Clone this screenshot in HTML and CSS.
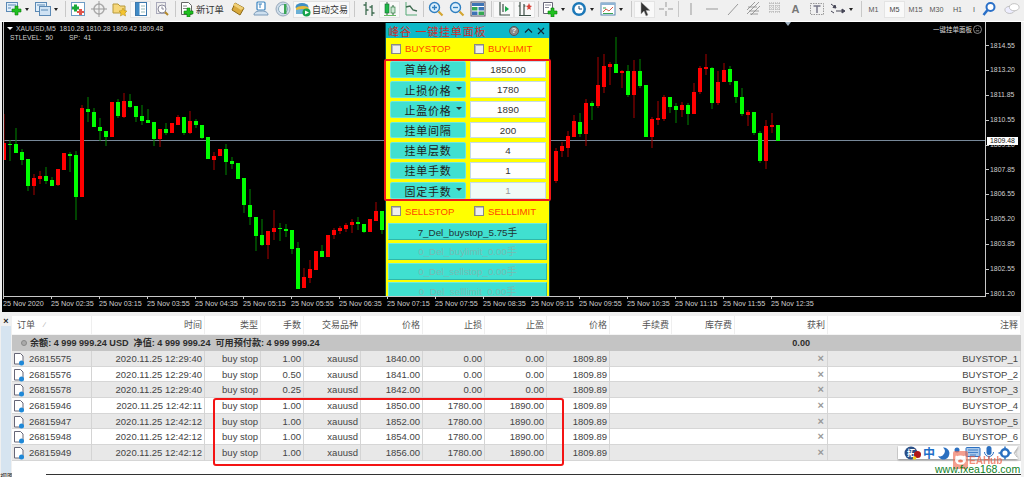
FILE: index.html
```html
<!DOCTYPE html>
<html lang="zh">
<head>
<meta charset="utf-8">
<title>MetaTrader</title>
<link rel="stylesheet" href="styles.css">
</head>
<body>
<svg class="defs" width="0" height="0" aria-hidden="true">
  <symbol id="i-newchart" viewBox="0 0 16 16"><rect x=".5" y="1.5" width="11" height="9" fill="#dfeefa" stroke="#5b89b5"/><path d="M2 4h8M2 7h3" stroke="#5b89b5"/><path d="M9 5h3v3h3v3h-3v3H9v-3H6V8h3z" fill="#1fc01f" stroke="#0b7d0b" stroke-width=".6"/></symbol>
  <symbol id="i-profile" viewBox="0 0 16 16"><rect x=".5" y="1.5" width="11" height="9" fill="#dfeefa" stroke="#5b89b5"/><rect x="4.5" y="5.5" width="11" height="9" fill="#cfe2f3" stroke="#5b89b5"/><path d="M2 4h8M6 9h7" stroke="#5b89b5"/></symbol>
  <symbol id="i-market" viewBox="0 0 16 16"><rect x="1.5" y="1.5" width="13" height="13" fill="#fff" stroke="#6d9cc5"/><path d="M4 3.5h3v2h2v3H7v2H4V8.500H2v-3h2z" fill="#18a838"/><path d="M9 8h3v2h2v2h-2v2H9v-2H7v-2h2z" fill="#e2554a"/></symbol>
  <symbol id="i-cross" viewBox="0 0 16 16"><circle cx="8" cy="8" r="5" fill="none" stroke="#aaa" stroke-width="1.500"/><path d="M8 0v16M0 8h16" stroke="#999"/></symbol>
  <symbol id="i-folder" viewBox="0 0 16 16"><path d="M1 3h5l2 2h5v7H1z" fill="#f6d77a" stroke="#b79a3c"/><path d="M11 7l1.300 2.700 2.700.3-2 2 .6 3-2.600-1.400L8.400 15l.6-3-2-2 2.700-.3z" fill="#f4c430" stroke="#b08a15" stroke-width=".5"/></symbol>
  <symbol id="i-nav" viewBox="0 0 16 16"><rect x="2.500" y="1.500" width="11" height="13" fill="#fff" stroke="#3b78ad"/><rect x="3" y="2" width="3.500" height="12" fill="#3f8ac6"/><path d="M8 5h4M8 8h4M8 11h4" stroke="#9bb"/></symbol>
  <symbol id="i-tester" viewBox="0 0 16 16"><rect x="2.500" y="1.500" width="9" height="11" fill="#eee" stroke="#aab"/><circle cx="8" cy="8" r="4" fill="#fff" stroke="#889"/><path d="M8 5.500V8h2" stroke="#889" fill="none"/><path d="M11 11l3 3" stroke="#b58a2a" stroke-width="2"/></symbol>
  <symbol id="i-order" viewBox="0 0 16 16"><path d="M2.500 1.500h7l3 3v9h-10z" fill="#fff" stroke="#666"/><path d="M4 5h4M4 7.500h5" stroke="#888"/><path d="M8 7h3v3h3v3h-3v3H8v-3H5v-3h3z" fill="#1fc01f" stroke="#0b7d0b" stroke-width=".6"/></symbol>
  <symbol id="i-gold" viewBox="0 0 16 16"><path d="M5 2l9 5-4 7-8-5z" fill="#d9a93c" stroke="#8d6a18"/><path d="M5 2l9 5-3 2-8-5z" fill="#f0d078"/></symbol>
  <symbol id="i-people" viewBox="0 0 16 16"><rect x="4" y="1" width="8" height="8" rx="1" fill="#fff" stroke="#3a84c0" stroke-width="1.200"/><path d="M7 3v4M5.500 3H9" stroke="#3a84c0"/><path d="M1 14c0-3 3-4 7-4s7 1 7 4z" fill="#cfe0ef" stroke="#7a9ab8"/></symbol>
  <symbol id="i-signal" viewBox="0 0 16 16"><circle cx="8" cy="8" r="7" fill="#cfdcea" stroke="#9ab"/><circle cx="8" cy="8" r="4.500" fill="#eef4f8" stroke="#8ab"/><path d="M9 3h2.500v10H9z" fill="#3aa655"/></symbol>
  <symbol id="i-auto" viewBox="0 0 16 16"><ellipse cx="7" cy="6" rx="6.500" ry="4" fill="#3f8fc5"/><path d="M1 7c2-2 8-3 12-1l1 3c-3-1-9-1-13 1z" fill="#e6b93a"/><path d="M1 9c3-1 8-1 12 0v4H1z" fill="#6bb0d5"/><circle cx="11.500" cy="11.500" r="4" fill="#16a34a"/><path d="M10 9.500l4 2-4 2z" fill="#fff"/></symbol>
  <symbol id="i-bars" viewBox="0 0 16 16"><path d="M5 1v13M11 4v11M5 4H2.500M5 9h2.500M11 6H8.500M11 12h2.500" stroke="#3d6b4f" stroke-width="1.300" fill="none"/></symbol>
  <symbol id="i-candle" viewBox="0 0 16 16"><path d="M5 1v14M11 4v11" stroke="#2d5d3b"/><rect x="3" y="3" width="4" height="9" fill="#1fb84a" stroke="#146b2c" stroke-width=".6"/><path d="M2 14.500h12" stroke="#6b6"/><rect x="9" y="6" width="4" height="6" fill="#cfe8d5" stroke="#146b2c" stroke-width=".6"/></symbol>
  <symbol id="i-line" viewBox="0 0 16 16"><path d="M3 1v13h11" stroke="#5a7" fill="none"/><path d="M3 6l4-1 3 4 4 1" stroke="#3d6b4f" stroke-width="1.300" fill="none"/></symbol>
  <symbol id="i-zin" viewBox="0 0 16 16"><circle cx="6.500" cy="6.500" r="5" fill="#dbeefb" stroke="#2f7fc0" stroke-width="1.400"/><path d="M4 6.500h5M6.500 4v5" stroke="#2f7fc0" stroke-width="1.300"/><path d="M10.500 10.500l4 4" stroke="#d3a531" stroke-width="2.200"/></symbol>
  <symbol id="i-zout" viewBox="0 0 16 16"><circle cx="6.500" cy="6.500" r="5" fill="#dbeefb" stroke="#2f7fc0" stroke-width="1.400"/><path d="M4 6.500h5" stroke="#2f7fc0" stroke-width="1.300"/><path d="M10.500 10.500l4 4" stroke="#d3a531" stroke-width="2.200"/></symbol>
  <symbol id="i-tile" viewBox="0 0 16 16"><rect x="1" y="1" width="14" height="14" fill="#fff" stroke="#556"/><path d="M2 2h12v3H2z" fill="#3d74b5"/><path d="M2 6h5.500v3.500H2z" fill="#34a853"/><path d="M8.500 6H14v3.500H8.500z" fill="#3d74b5"/><path d="M2 10.500h5.500V14H2z" fill="#3d74b5"/><path d="M8.500 10.500H14V14H8.500z" fill="#34a853"/></symbol>
  <symbol id="i-shift" viewBox="0 0 16 16"><path d="M4 1v13h10M7 3v8" stroke="#3c4f45" stroke-width="1.200" fill="none"/><path d="M9 5l4 3-4 3z" fill="#19a84a"/></symbol>
  <symbol id="i-scroll" viewBox="0 0 16 16"><path d="M3 1v13M7 3v11M2 14.500h12M1.500 5H3M7 5h1.500" stroke="#3c4f45" stroke-width="1.200" fill="none"/><path d="M12 2l1 2.500 2 .5-1.700 1.500.5 2.500-1.800-1.300-1.800 1.300.5-2.500L9 5l2-.5z" fill="#d8443a"/></symbol>
  <symbol id="i-ind" viewBox="0 0 16 16"><path d="M1.500 1.500h9v11h-9z" fill="#fff" stroke="#667"/><path d="M3 4h6M3 6.500h4" stroke="#889"/><path d="M9 7h3v3h3v3h-3v3H9v-3H6v-3h3z" fill="#1fc01f" stroke="#0b7d0b" stroke-width=".6"/></symbol>
  <symbol id="i-clock" viewBox="0 0 16 16"><circle cx="8" cy="8" r="7" fill="#1c78b8"/><circle cx="8" cy="8" r="4.500" fill="#fff"/><path d="M8 5v3h3" stroke="#1c4a70" fill="none"/></symbol>
  <symbol id="i-tpl" viewBox="0 0 16 16"><rect x="1" y="2" width="14" height="12" fill="#fff" stroke="#5b89b5"/><path d="M1 2h14v2H1z" fill="#8fb4d4"/><path d="M3 11l3-3 3 2 4-4" stroke="#d65a4a" fill="none"/><path d="M3 12.500h10M3 7h3" stroke="#3aa655"/></symbol>
  <symbol id="i-cursor" viewBox="0 0 16 16"><path d="M4 1v12l3-3 2 5 2-1-2-4.500h4z" fill="#333" stroke="#aaa" stroke-width=".5"/></symbol>
  <symbol id="i-plus" viewBox="0 0 16 16"><path d="M8 1v5M8 10v5M1 8h5M10 8h5" stroke="#999"/></symbol>
  <symbol id="i-vline" viewBox="0 0 16 16"><path d="M8 2v12" stroke="#999"/></symbol>
  <symbol id="i-hline" viewBox="0 0 16 16"><path d="M2 8h12" stroke="#999"/></symbol>
  <symbol id="i-trend" viewBox="0 0 16 16"><path d="M3 14L13 3" stroke="#999"/></symbol>
  <symbol id="i-fib" viewBox="0 0 16 16"><path d="M1 13L13 1M1 9l8-8M5 14L14 5M2 6h9M3 10h10M4 13h8" stroke="#888" stroke-width=".8"/></symbol>
  <symbol id="i-gann" viewBox="0 0 16 16"><path d="M2 2h11M2 5h11M2 8h11M2 11h11M3 2v10M6 2v10M9 2v10M12 2v10" stroke="#aaa" stroke-dasharray="1 1"/></symbol>
  <symbol id="i-textbox" viewBox="0 0 16 16"><rect x="1.500" y="2.500" width="13" height="11" fill="none" stroke="#999" stroke-dasharray="1.500 1"/><path d="M4.500 5h7M8 5v7" stroke="#778" stroke-width="1.500"/></symbol>
  <symbol id="i-arrows" viewBox="0 0 16 16"><path d="M1 3l4 3M5 4l1 3-3-.5zM6 10h7M12 8l3 2-3 2zM1 10l3 2" stroke="#445" fill="#445"/></symbol>
  <symbol id="i-search" viewBox="0 0 16 16"><circle cx="9.500" cy="6" r="4" fill="#fff" stroke="#2a70c8" stroke-width="2"/><path d="M6.500 9l-4 5" stroke="#2a70c8" stroke-width="2.500"/></symbol>
  <symbol id="i-chat" viewBox="0 0 18 16"><ellipse cx="6.500" cy="9" rx="5.500" ry="4" fill="#eef" stroke="#bbb"/><ellipse cx="11.500" cy="6" rx="5.500" ry="4" fill="#fff" stroke="#bbb"/></symbol>
  <symbol id="i-doc" viewBox="0 0 12 14"><path d="M1.500 1.500h6l2.500 2.500v8h-8.500z" fill="#fff" stroke="#667"/><circle cx="8.500" cy="11" r="2.500" fill="#1e88d8"/></symbol>
</svg>

<header class="toolbar">
  <span class="grip"></span>
  <span class="tool drop"><svg class="ico"><use href="#i-newchart"/></svg><i class="caret"></i></span>
  <span class="tool drop"><svg class="ico"><use href="#i-profile"/></svg><i class="caret"></i></span>
  <span class="sep w4"></span>
  <span class="tool"><svg class="ico"><use href="#i-market"/></svg></span>
  <span class="tool"><svg class="ico"><use href="#i-cross"/></svg></span>
  <span class="tool"><svg class="ico"><use href="#i-folder"/></svg></span>
  <span class="tool on"><svg class="ico"><use href="#i-nav"/></svg></span>
  <span class="tool"><svg class="ico"><use href="#i-tester"/></svg></span>
  <span class="sep w6"></span>
  <span class="tool neworder"><svg class="ico"><use href="#i-order"/></svg><b>新订单</b></span>
  <span class="tool wide"><svg class="ico"><use href="#i-gold"/></svg></span>
  <span class="tool wide"><svg class="ico"><use href="#i-people"/></svg></span>
  <span class="tool"><svg class="ico"><use href="#i-signal"/></svg></span>
  <span class="tool autotrade"><svg class="ico"><use href="#i-auto"/></svg><b>自动交易</b></span>
  <span class="sep w8"></span>
  <span class="tool"><svg class="ico"><use href="#i-bars"/></svg></span>
  <span class="tool on"><svg class="ico"><use href="#i-candle"/></svg></span>
  <span class="tool"><svg class="ico"><use href="#i-line"/></svg></span>
  <span class="sep w4"></span>
  <span class="tool"><svg class="ico"><use href="#i-zin"/></svg></span>
  <span class="tool"><svg class="ico"><use href="#i-zout"/></svg></span>
  <span class="tool"><svg class="ico"><use href="#i-tile"/></svg></span>
  <span class="sep w5"></span>
  <span class="tool on"><svg class="ico"><use href="#i-shift"/></svg></span>
  <span class="tool on"><svg class="ico"><use href="#i-scroll"/></svg></span>
  <span class="sep w6"></span>
  <span class="tool drop"><svg class="ico"><use href="#i-ind"/></svg><i class="caret"></i></span>
  <span class="tool drop"><svg class="ico"><use href="#i-clock"/></svg><i class="caret"></i></span>
  <span class="tool drop"><svg class="ico"><use href="#i-tpl"/></svg><i class="caret"></i></span>
  <span class="sep w6"></span>
  <span class="tool on"><svg class="ico"><use href="#i-cursor"/></svg></span>
  <span class="tool"><svg class="ico"><use href="#i-plus"/></svg></span>
  <span class="sep w4"></span>
  <span class="tool"><svg class="ico"><use href="#i-vline"/></svg></span>
  <span class="tool"><svg class="ico"><use href="#i-hline"/></svg></span>
  <span class="tool"><svg class="ico"><use href="#i-trend"/></svg></span>
  <span class="tool"><svg class="ico"><use href="#i-fib"/></svg></span>
  <span class="tool"><svg class="ico"><use href="#i-gann"/></svg></span>
  <span class="tool letter">A</span>
  <span class="tool"><svg class="ico"><use href="#i-textbox"/></svg></span>
  <span class="tool drop after-gap"><svg class="ico"><use href="#i-arrows"/></svg><i class="caret"></i></span>
  <span class="sep w5"></span>
  <span class="tool period">M1</span>
  <span class="tool period on">M5</span>
  <span class="tool period">M15</span>
  <span class="tool period">M30</span>
  <span class="tool period">H1</span>
  <span class="tool period cut">I</span>
  <span class="tool search"><svg class="ico"><use href="#i-search"/></svg></span>
  <span class="tool chat"><svg class="ico"><use href="#i-chat"/></svg></span>
</header>

<main class="chart">
  <section class="plot">
    <svg class="candles" width="983" height="275" viewBox="3 22 983 275">
      <path class="level" d="M3 140.500H986"/>
      <path class="wick red" d="M4 114V143M34 174V195M40 171V184M58 169V186M82 105V108M124 93V118M160 129V147M178 115V125M190 111V134M214 152V170M268 231V259M274 210V240M304 268V277M310 260V283M334 228V239M340 226V234M346 223V232M352 219V233M376 202V221M556 148V183M562 142V157M568 131V157M574 115V137M586 99V146M598 57V108M604 54V93M610 62V85M622 70V88M634 60V118M652 117V148M658 101V125M664 95V121M682 102V117M694 83V114M700 66V94M706 54V75M718 71V105M724 63V82M748 110V126M766 120V169M772 113V133"/>
      <path class="wick green" d="M10 140V161M16 128V153M22 149V165M28 186V191M46 167V184M52 177V186M70 152V172M76 151V220M88 97V122M94 108V112M100 118V141M106 131V146M118 99V118M130 94V108M136 117V122M142 105V125M148 109V123M154 139V146M166 123V135M184 117V135M196 119V128M202 125V139M226 144V175M232 157V169M244 205V213M250 189V225M256 236V251M262 219V246M280 223V241M286 224V237M292 249V254M298 242V248M322 245V257M358 217V230M364 232V233M382 230V234M580 113V137M592 101V120M616 37V73M628 65V97M640 59V88M670 107V113M676 103V123M688 103V125M712 67V109M730 66V85M736 97V103M742 88V116M754 133V135M760 131V163"/>
      <path class="body red" d="M4 143V160M34 178V186M40 176V179M58 169V185M64 153V170M82 108V197M112 102V137M124 101V117M160 129V139M172 123V133M178 117V125M190 121V133M214 156V160M220 149V156M268 231V245M274 228V232M304 277V288M310 269V278M316 251V270M328 235V257M334 230V235M340 228V231M346 225V229M352 222V225M370 219V232M376 211V221M556 151V181M562 146V151M568 136V148M574 121V137M586 103V134M598 85V106M604 66V87M610 64V67M622 71V73M634 71V95M652 119V137M658 118V120M664 97V119M682 105V110M694 92V114M700 68V92M706 67V69M718 82V103M724 70V82M748 112V115M766 126V161M772 125V127"/>
      <path class="body green" d="M10 144V145M16 144V153M22 152V160M28 159V186M46 176V181M52 180V186M70 154V156M76 155V197M88 109V112M94 112V127M100 127V131M106 131V137M118 102V116M130 101V107M136 106V117M142 116V121M148 120V123M154 122V139M166 129V133M184 117V133M196 121V125M202 125V138M208 137V159M226 149V162M232 161V164M238 163V179M244 178V205M250 205V217M256 217V236M262 235V245M280 228V229M286 229V231M292 230V249M298 248V289M322 251V257M358 222V224M364 224V232M382 211V230M580 122V134M592 103V106M616 64V73M628 71V95M640 71V86M646 85V137M670 97V107M676 106V110M688 105V114M712 68V103M730 69V82M736 81V97M742 97V114M754 112V133M760 133V161M778 125V141"/>
    </svg>
    <div class="chart-info">
      <p><i class="down"></i>XAUUSD,M5&nbsp; 1810.28 1810.28 1809.42 1809.48</p>
      <p class="levels"><span>STLEVEL:&nbsp; 50</span><span>SP:&nbsp; 41</span></p>
    </div>
    <i class="shift-mark"></i>
    <div class="ea-name"><span>一键挂单面板</span><svg width="9" height="9" viewBox="0 0 9 9"><circle cx="4.500" cy="4.500" r="4" fill="none" stroke="#bbb" stroke-width=".7"/><path d="M3 3.500h.5M5.500 3.500H6M2.800 5.800h3.400" stroke="#ccc" stroke-width=".7"/></svg></div>
  </section>

  <aside class="prices">
    <span>1814.55</span><span>1813.20</span><span>1811.85</span><span>1810.55</span><span>1809.20</span><span>1807.85</span><span>1806.55</span><span>1805.20</span><span>1803.85</span><span>1802.55</span><span>1801.20</span>
    <b class="price-tag">1809.48</b>
  </aside>

  <footer class="times">
    <span>25 Nov 2020</span><span>25 Nov 02:35</span><span>25 Nov 03:15</span><span>25 Nov 03:55</span><span>25 Nov 04:35</span><span>25 Nov 05:15</span><span>25 Nov 05:55</span><span>25 Nov 06:35</span><span>25 Nov 07:15</span><span>25 Nov 07:55</span><span>25 Nov 08:35</span><span>25 Nov 09:15</span><span>25 Nov 09:55</span><span>25 Nov 10:35</span><span>25 Nov 11:15</span><span>25 Nov 11:55</span><span>25 Nov 12:35</span>
  </footer>

  <section class="panel">
    <div class="panel-title">
      <h1>峰谷 一键挂单面板</h1>
      <span class="help">?</span>
      <svg class="win" width="9" height="7" viewBox="0 0 9 7"><path d="M1 5.500L4.500 2 8 5.500" fill="none" stroke="#123" stroke-width="1.200"/></svg>
      <svg class="win" width="8" height="8" viewBox="0 0 8 8"><path d="M1 1l6 6M7 1L1 7" stroke="#123" stroke-width="1.100"/></svg>
    </div>
    <div class="panel-checks">
      <label class="check first"><i></i>BUYSTOP</label>
      <label class="check"><i></i>BUYLIMIT</label>
    </div>
    <div class="panel-form">
      <span class="flabel">首单价格</span><span class="fvalue">1850.00</span>
      <span class="flabel more">止损价格</span><span class="fvalue">1780</span>
      <span class="flabel more">止盈价格</span><span class="fvalue">1890</span>
      <span class="flabel">挂单间隔</span><span class="fvalue">200</span>
      <span class="flabel">挂单层数</span><span class="fvalue">4</span>
      <span class="flabel">挂单手数</span><span class="fvalue">1</span>
      <span class="flabel more">固定手数</span><span class="fvalue off">1</span>
    </div>
    <div class="panel-checks sell">
      <label class="check first"><i></i>SELLSTOP</label>
      <label class="check"><i></i>SELLLIMIT</label>
    </div>
    <div class="panel-buttons">
      <span class="pbtn">7_Del_buystop_5.75手</span>
      <span class="pbtn off">0_Del_buylimit_0.00手</span>
      <span class="pbtn off">0_Del_sellstop_0.00手</span>
      <span class="pbtn off">0_Del_selllimit_0.00手</span>
    </div>
  </section>
</main>

<section class="terminal">
  <aside class="side"><span class="close">×</span><span class="strip"></span><span class="tab">视图</span></aside>
  <div class="orders">
    <div class="grid head">
      <span class="left">订单<em>∕</em></span><span>时间</span><span>类型</span><span>手数</span><span>交易品种</span><span>价格</span><span>止损</span><span>止盈</span><span>价格</span><span>手续费</span><span>库存费</span><span>获利</span><span>注释</span>
    </div>
    <div class="grid balance">
      <span class="summary"><i></i>余额: 4 999 999.24 USD&nbsp; 净值: 4 999 999.24&nbsp; 可用预付款: 4 999 999.24</span>
      <span class="profit">0.00</span>
    </div>
    <div class="grid row"><span class="left"><svg class="doc"><use href="#i-doc"/></svg>26815575</span><span>2020.11.25 12:29:40</span><span>buy stop</span><span>1.00</span><span>xauusd</span><span>1840.00</span><span>0.00</span><span>0.00</span><span>1809.89</span><span class="fee">×</span><span>BUYSTOP_1</span></div>
    <div class="grid row"><span class="left"><svg class="doc"><use href="#i-doc"/></svg>26815576</span><span>2020.11.25 12:29:40</span><span>buy stop</span><span>0.50</span><span>xauusd</span><span>1841.00</span><span>0.00</span><span>0.00</span><span>1809.89</span><span class="fee">×</span><span>BUYSTOP_2</span></div>
    <div class="grid row"><span class="left"><svg class="doc"><use href="#i-doc"/></svg>26815578</span><span>2020.11.25 12:29:40</span><span>buy stop</span><span>0.25</span><span>xauusd</span><span>1842.00</span><span>0.00</span><span>0.00</span><span>1809.89</span><span class="fee">×</span><span>BUYSTOP_3</span></div>
    <div class="grid row"><span class="left"><svg class="doc"><use href="#i-doc"/></svg>26815946</span><span>2020.11.25 12:42:11</span><span>buy stop</span><span>1.00</span><span>xauusd</span><span>1850.00</span><span>1780.00</span><span>1890.00</span><span>1809.89</span><span class="fee">×</span><span>BUYSTOP_4</span></div>
    <div class="grid row"><span class="left"><svg class="doc"><use href="#i-doc"/></svg>26815947</span><span>2020.11.25 12:42:12</span><span>buy stop</span><span>1.00</span><span>xauusd</span><span>1852.00</span><span>1780.00</span><span>1890.00</span><span>1809.89</span><span class="fee">×</span><span>BUYSTOP_5</span></div>
    <div class="grid row"><span class="left"><svg class="doc"><use href="#i-doc"/></svg>26815948</span><span>2020.11.25 12:42:12</span><span>buy stop</span><span>1.00</span><span>xauusd</span><span>1854.00</span><span>1780.00</span><span>1890.00</span><span>1809.89</span><span class="fee">×</span><span>BUYSTOP_6</span></div>
    <div class="grid row"><span class="left"><svg class="doc"><use href="#i-doc"/></svg>26815949</span><span>2020.11.25 12:42:12</span><span>buy stop</span><span>1.00</span><span>xauusd</span><span>1856.00</span><span>1780.00</span><span>1890.00</span><span>1809.89</span><span class="fee">×</span><span></span></div>
    <div class="tabline"></div>
  </div>
  <div class="highlight"></div>
  <svg class="ime" width="124" height="20" viewBox="0 0 124 20">
    <path class="ime-bg" d="M1 1h120l-3 6 3 7H1z"/>
    <circle cx="14" cy="8" r="6.500" fill="#2b4f86"/>
    <text class="ime-globe" x="14" y="11">拓</text>
    <circle cx="20.500" cy="9.500" r="3.500" fill="#b01818"/>
    <circle cx="17.500" cy="13" r="1.800" fill="#f5d020"/>
    <text class="ime-zh" x="32" y="12.500">中</text>
    <path d="M46 2.500a6 6 0 1 1-5 8.500a5 5 0 0 0 5-8.500z" fill="#2a6fc0"/>
    <circle cx="60" cy="5" r="2.500" fill="#2a6fc0"/>
    <rect x="69" y="2.500" width="14" height="9" rx="1" fill="#a9c8ea" stroke="#2a6fc0"/>
    <path d="M71 5h10M71 7.500h10M73 10h6" stroke="#2a6fc0" stroke-width=".8"/>
    <rect x="89.500" y="1" width="5" height="9" rx="2.500" fill="#2a6fc0"/>
    <path d="M87.500 7a4.500 4.500 0 0 0 9 0M92 11.500V14" stroke="#2a6fc0" fill="none"/>
    <circle cx="108" cy="8" r="3.800" fill="#fff" stroke="#2a6fc0" stroke-width="2.500"/>
    <path d="M108 1.500v2M108 12.500v2M101.500 8h2M112.500 8h2" stroke="#2a6fc0" stroke-width="1.500"/>
    <path d="M120 4l-3 4 3 4" fill="none" stroke="#bbb"/>
  </svg>
  <div class="wm-pig">
    <svg width="15" height="18" viewBox="0 0 15 18"><rect width="15" height="18" rx="2" fill="#ee6a50" opacity=".75"/><ellipse cx="7.500" cy="9" rx="5.500" ry="4.500" fill="#fff"/><ellipse cx="7.500" cy="10" rx="2.500" ry="1.600" fill="#ee6a50"/><path d="M2.500 5.500l2 1M12.500 5.500l-2 1" stroke="#fff" stroke-width="2"/></svg>
    <span>EAHub</span>
  </div>
  <div class="wm-url">www.fxea168.com</div>
</section>
</body>
</html>
```

FILE: styles.css
```css
* { box-sizing: border-box; }
html, body { margin: 0; height: 477px; overflow: hidden; }
body {
  width: 1024px;
  background: #f0f0f0;
  color: #444;
  font-family: "Liberation Sans", "Noto Sans CJK SC", sans-serif;
  font-size: 9.5px;
}
.defs { position: absolute; }

/* toolbar */
.toolbar {
  display: flex;
  align-items: center;
  height: 22px;
  padding: 0 0 3px 0;
  background: #f0f0f0;
  border-bottom: 1px solid #fff;
}
.grip { width: 5px; height: 14px; flex: none; }
.tool {
  flex: none;
  display: flex;
  align-items: center;
  justify-content: center;
  width: 21px;
  height: 17px;
  border: 1px solid transparent;
}
.tool.on { background: #f9f9f9; border-color: #e4e4e4; }
.ico { width: 16px; height: 16px; flex: none; }
.tool b { font-weight: 400; color: #333; font-size: 9.3px; white-space: nowrap; }
.drop { width: 29px; justify-content: flex-start; padding-left: 0; }
.caret {
  margin-left: 3px;
  width: 0;
  height: 0;
  border: 2.500px solid transparent;
  border-top: 3px solid #222;
  border-bottom: 0;
}
.wide { width: 23px; }
.neworder { width: 48px; justify-content: flex-start; gap: 1px; }
.autotrade { width: 57px; background: #f9f9f9; border-color: #e2e2e2; gap: 1px; }
.autotrade b { font-size: 9px; }
.after-gap { margin-left: 2px; }
.letter { color: #777; font-size: 11px; font-weight: 700; }
.period { color: #555; font-size: 7.200px; }
.period.on { color: #444; }
.cut { width: 12px; }
.search { width: 17px; }
.chat { width: 18px; margin-left: 6px; }
.sep { flex: none; height: 16px; position: relative; }
.sep::after { content: ""; position: absolute; left: 50%; top: 0; bottom: 0; width: 1px; background: #c8c8c8; }
.w4 { width: 4px; } .w5 { width: 5px; } .w6 { width: 6px; } .w8 { width: 8px; }

/* chart */
.chart {
  position: relative;
  display: grid;
  grid-template-columns: 983px 35px;
  grid-template-rows: 275px 15px;
  width: 1019px;
  height: 290px;
  margin-left: 2px;
  padding-left: 1px;
  background: #000;
  color: #cfcfcf;
  font-size: 7.200px;
}
.plot {
  position: relative;
  overflow: hidden;
  border-left: 1px solid #c8c8c8;
  border-right: 1px solid #c8c8c8;
  border-bottom: 1px solid #c8c8c8;
}
.candles { position: absolute; left: -1px; top: 0; }
.level { stroke: #778899; fill: none; }
.wick { fill: none; stroke-width: 1; }
.body { fill: none; stroke-width: 4; }
.red { stroke: #f00; }
.green { stroke: #0f0; }
.wick.red { stroke: #a00; }
.wick.green { stroke: #080; }
.chart-info { position: absolute; left: 2px; top: 2px; font-size: 6.800px; }
.chart-info p { display: flex; align-items: center; margin: 0 0 1.600px; height: 8px; white-space: pre; }
.down { width: 0; height: 0; margin: 0 3px 0 1px; border: 3px solid transparent; border-top: 3px solid #fff; border-bottom: 0; }
.levels { padding-left: 4px; gap: 16px; }
.shift-mark {
  position: absolute; left: 781px; top: 0;
  width: 0; height: 0;
  border: 3.500px solid transparent; border-top: 4px solid #9fb0c0; border-bottom: 0;
}
.ea-name { position: absolute; right: 3px; top: 2px; display: flex; align-items: center; gap: 1px; font-size: 6.500px; color: #ddd; }

.prices { position: relative; display: flex; flex-direction: column; padding-top: 11.600px; font-size: 6.900px; }
.prices span {
  flex: none; height: 24.800px; line-height: 24.800px; padding-left: 4px;
  background: linear-gradient(#c8c8c8, #c8c8c8) 0 50% / 3px 1px no-repeat;
}
.price-tag {
  position: absolute; left: 1px; top: 115px; width: 31px; height: 8px;
  background: #fff; color: #111; font-weight: 400; line-height: 8px; text-align: center;
}
.times { grid-column: 1 / 3; display: flex; overflow: hidden; }
.times span {
  flex: none; width: 48px; white-space: nowrap; padding-top: 2px;
  background: linear-gradient(#c8c8c8, #c8c8c8) 0 0 / 1px 2px no-repeat;
}

/* one-click panel */
.panel {
  position: absolute; left: 383px; top: 1px;
  display: flex; flex-direction: column;
  width: 165px; height: 273px;
  background: #ff0;
  border-left: 1px solid #0b4a4a;
  border-right: 1px solid #0b4a4a;
}
.panel-title {
  flex: none; display: flex; align-items: center;
  height: 15px; padding-left: 2px;
  background: #0db8c8;
}
.panel-title h1 { flex: 1; margin: 0; font-size: 11px; font-weight: 400; letter-spacing: .8px; color: #c83030; white-space: pre; }
.help {
  width: 10px; height: 10px; margin-right: 5px; border-radius: 50%;
  background: #8a8a8a; border: 1px solid #555; color: #eee;
  font-size: 8px; font-weight: 700; line-height: 8px; text-align: center;
}
.win { margin-right: 4px; }
.panel-checks { flex: none; display: flex; align-items: center; height: 21px; padding: 0 0 0 5px; }
.panel-checks.sell { height: 20px; }
.check { flex: none; display: flex; align-items: center; width: 83px; color: #f40; font-size: 9.600px; }
.check i { flex: none; width: 10px; height: 10px; margin-right: 4px; background: #eee; border: 1px solid #888; box-shadow: inset 1px 1px 0 #bbb; }
.panel-form {
  flex: none;
  display: grid;
  grid-template-columns: 76px 76px;
  grid-auto-rows: 16.900px;
  column-gap: 4px; row-gap: 3.300px;
  height: 142px;
  margin: 0 -2px;
  padding: 0 0 0 4px;
  background: #ff0;
  border: 2px solid #f01818;
  border-radius: 2px;
}
.flabel {
  position: relative;
  display: flex; align-items: center; justify-content: center;
  background: #40e0d0;
  border: 1px solid #6fe8da;
  color: #222;
  font-size: 11px;
  letter-spacing: .7px;
  border-radius: 2px;
}
.flabel.more::after {
  content: ""; position: absolute; right: 3px; top: 5px;
  width: 0; height: 0;
  border: 3px solid transparent; border-top: 3px solid #333; border-bottom: 0;
}
.fvalue {
  display: flex; align-items: center; justify-content: center;
  background: #fff; border: 1px solid #c4dce8; color: #333; font-size: 9.800px;
}
.fvalue.off { background: #f0fbf6; color: #999; }
.panel-buttons { flex: 1; min-height: 0; overflow: hidden; display: flex; flex-direction: column; gap: 2.800px; padding: 2px 2px 0; }
.pbtn {
  flex: none; display: flex; align-items: center; justify-content: center;
  height: 17px;
  background: #40e0d0;
  border: 1px solid #30b8a8;
  border-top-color: #70eadd; border-left-color: #70eadd;
  color: #233; font-size: 9.800px; white-space: nowrap;
}
.pbtn.off { color: #77bbb2; }

/* terminal */
.terminal { position: relative; display: flex; height: 165px; background: #f0f0f0; }
.side { flex: none; display: flex; flex-direction: column; width: 12px; }
.close { height: 14px; padding-top: 4px; text-align: center; color: #222; font-size: 9px; font-weight: 700; line-height: 10px; }
.strip { flex: none; height: 147px; margin: 0 1px; background: #d6e4f0; }
.tab { height: 4px; overflow: hidden; font-size: 7px; line-height: 7px; color: #222; white-space: nowrap; }
.orders { flex: none; width: 1009px; height: 161px; margin-top: 4px; background: #fff; }
.tabline { margin: 13px 0 0 34px; border-top: 1px solid #333; }
.grid {
  display: grid;
  grid-template-columns: 80px 113px 56px 43px 57px 62px 62px 62px 63px 62px 63px 93px 193px;
}
.grid > span { padding-right: 2px; text-align: right; white-space: nowrap; }
.head { height: 19px; line-height: 18px; background: #fff; color: #555; font-size: 9px; }
.head > span { border-right: 1px solid #efefef; border-bottom: 1px solid #f4f4f4; }
.head .left em { margin-left: 9px; font-style: normal; color: #999; font-size: 7px; }
.left { display: flex; align-items: center; text-align: left !important; padding-left: 5px; }
.balance { height: 16px; line-height: 16px; background: #c4c4c4; color: #2c2c2c; font-weight: 700; font-size: 9.100px; }
.summary { grid-column: 1 / 12; display: flex; align-items: center; text-align: left !important; padding-left: 17px; }
.summary i { flex: none; width: 6px; height: 6px; margin: 0 3px 0 -8px; border-radius: 50%; background: #aaa; border: 1px solid #888; }
.balance .profit { grid-column: 12; padding-right: 18px; }
.row { height: 15.700px; line-height: 15.700px; border-bottom: 1px solid #d6d6d6; color: #444; }
.row:nth-of-type(odd) { background: #e8e8e8; }
.row:nth-of-type(even) { background: #fff; }
.row > span { border-right: 1px solid #d4d4d4; }
.row .left { padding-left: 1px; }
.doc { flex: none; width: 12px; height: 14px; margin-right: 4px; }
.fee { grid-column: span 3; padding-right: 3px !important; color: #999; font-size: 11px; font-weight: 700; }
.highlight {
  position: absolute; left: 213px; top: 86px;
  width: 351px; height: 68px;
  border: 2px solid #f41414; border-radius: 3px;
}
.ime { position: absolute; left: 897px; top: 133px; }
.ime-bg { fill: #fff; filter: drop-shadow(0 1px 1px #888); }
.ime-globe { fill: #fff; font-size: 8px; text-anchor: middle; font-weight: 700; }
.ime-zh { fill: #1e6fc8; font-size: 12px; font-weight: 700; text-anchor: middle; font-family: "Noto Sans CJK SC", sans-serif; }
.wm-pig { position: absolute; left: 953px; top: 139px; display: flex; align-items: center; color: #ec5a40; opacity: .85; font-size: 10px; font-weight: 700; }
.wm-pig span { margin-left: 1px; opacity: .8; }
.wm-url { position: absolute; left: 935px; top: 151px; color: #0f7f1f; font-size: 10.500px; line-height: 12px; white-space: nowrap; }
```
